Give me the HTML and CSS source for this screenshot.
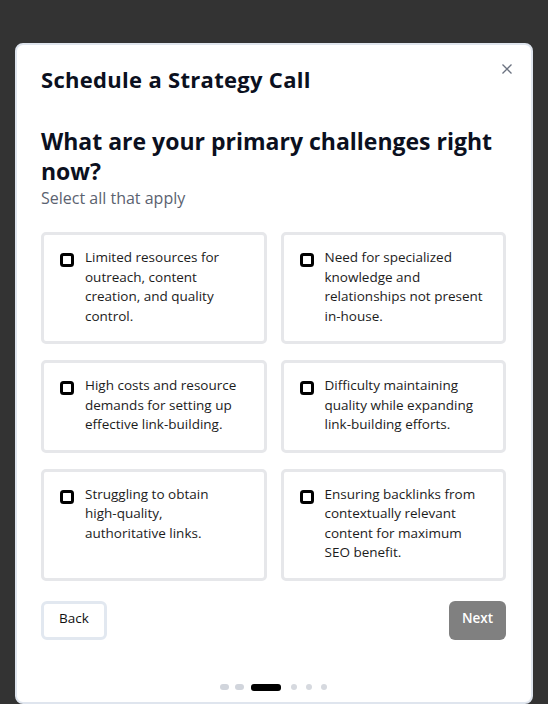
FILE: index.html
```html
<!DOCTYPE html>
<html lang="en">
<head>
<meta charset="utf-8">
<title>Schedule a Strategy Call</title>
<link rel="stylesheet" href="styles.css">
</head>
<body>
<div class="overlay">
  <div class="modal">
    <button class="close" aria-label="Close">
      <svg width="10" height="10" viewBox="0 0 10 10"><path d="M0.5 0.5 L9.5 9.5 M9.5 0.5 L0.5 9.5" stroke="#6b7280" stroke-width="1.3" fill="none"/></svg>
    </button>
    <h1 class="title">Schedule a Strategy Call</h1>
    <h2 class="question">What are your primary challenges right now?</h2>
    <p class="hint">Select all that apply</p>
    <div class="options">
      <label class="option"><span class="box"></span><span class="text">Limited resources for outreach, content creation, and quality control.</span></label>
      <label class="option"><span class="box"></span><span class="text">Need for specialized knowledge and relationships not present in-house.</span></label>
      <label class="option"><span class="box"></span><span class="text">High costs and resource demands for setting up effective link-building.</span></label>
      <label class="option"><span class="box"></span><span class="text">Difficulty maintaining quality while expanding link-building efforts.</span></label>
      <label class="option"><span class="box"></span><span class="text">Struggling to obtain <span class="nowrap">high-quality,</span> authoritative links.</span></label>
      <label class="option"><span class="box"></span><span class="text">Ensuring backlinks from contextually relevant content for maximum SEO benefit.</span></label>
    </div>
    <div class="actions">
      <button class="btn back">Back</button>
      <button class="btn next">Next</button>
    </div>
    <div class="dots">
      <span class="dot done"></span>
      <span class="dot done"></span>
      <span class="dot active"></span>
      <span class="dot todo"></span>
      <span class="dot todo"></span>
      <span class="dot todo"></span>
    </div>
  </div>
</div>
</body>
</html>
```
FILE: styles.css
```css
* { box-sizing: border-box; }
html, body { margin: 0; padding: 0; }
body {
  background: #333333;
  font-family: "Open Sans", "DejaVu Sans", sans-serif;
  height: 704px;
  overflow: hidden;
}
.overlay {
  padding: 43px 15px 0 15px;
}
.modal {
  position: relative;
  background: #ffffff;
  border: 2px solid #dfe5ee;
  border-radius: 8px;
  padding: 20px 24px 0 24px;
  height: 661px;
  overflow: hidden;
}
.close {
  position: absolute;
  top: 19px;
  right: 19px;
  width: 10px;
  height: 10px;
  padding: 0;
  border: 0;
  background: none;
  display: flex;
}
.title {
  margin: 0;
  font-size: 22px;
  line-height: 29px;
  font-weight: 700;
  color: #0b1020;
  letter-spacing: 0.3px;
}
.question {
  margin: 32px 0 0 0;
  font-size: 23px;
  line-height: 30px;
  font-weight: 700;
  color: #0b1020;
}
.hint {
  margin: 0;
  font-size: 16px;
  line-height: 24px;
  color: #5b6270;
}
.options {
  margin-top: 22px;
  display: grid;
  grid-template-columns: 1fr 1fr;
  column-gap: 14px;
  row-gap: 16px;
  margin-right: 1px;
}
.option {
  display: flex;
  align-items: flex-start;
  gap: 11px;
  border: 3px solid #e6e7ea;
  border-radius: 5px;
  padding: 13px 19px 15px 16px;
}
.box {
  flex: none;
  width: 14px;
  height: 14px;
  margin-top: 5px;
  border: 3px solid #000;
  border-radius: 3.5px;
}
.text {
  font-size: 13.5px;
  line-height: 19.5px;
  color: #1c1c1c;
}
.nowrap { white-space: nowrap; }
.actions {
  margin-top: 20px;
  display: flex;
  justify-content: space-between;
  margin-right: 1px;
}
.btn {
  height: 39px;
  font-family: inherit;
  font-size: 13.5px;
  border-radius: 6px;
  padding: 0 0 4px 0;
}
.back {
  width: 66px;
  background: #fff;
  border: 3px solid #e2e8f0;
  color: #111;
  font-weight: 500;
}
.next {
  width: 57px;
  background: #808080;
  border: 0;
  color: #fff;
  font-weight: 600;
}
.dots {
  margin-top: 44px;
  display: flex;
  justify-content: center;
  align-items: center;
  gap: 6px;
}
.dot {
  display: block;
  height: 6px;
  border-radius: 3px;
}
.dot.done { width: 9px; background: #d1d5dc; }
.dot.active { width: 30px; height: 7px; background: #000; margin: 0 3px 0 1px; }
.dot.todo { width: 6px; background: #d6d9df; margin: 0 1.5px; }
```
